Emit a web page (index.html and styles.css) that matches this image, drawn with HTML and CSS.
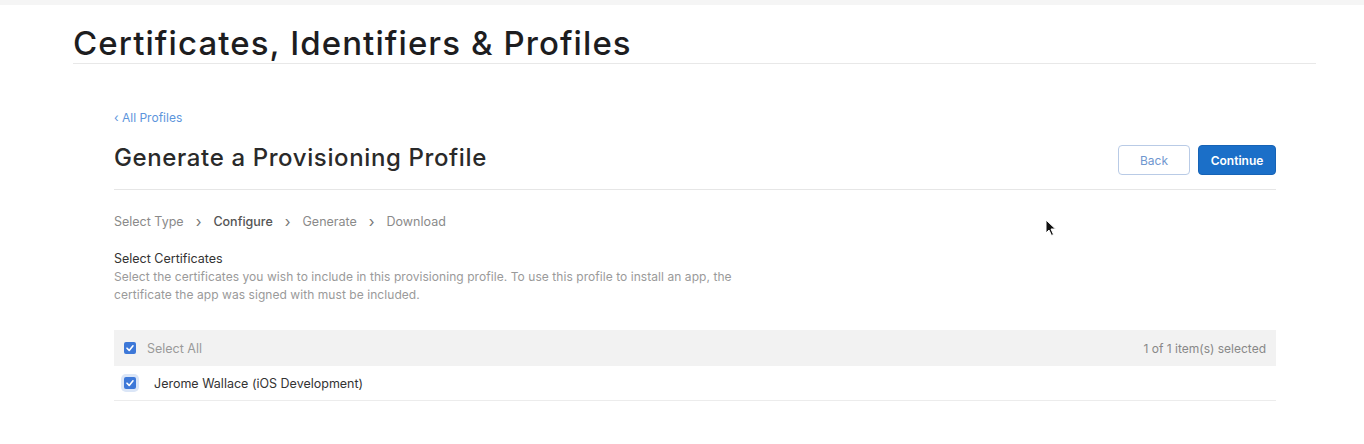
FILE: index.html
```html
<!DOCTYPE html>
<html>
<head>
<meta charset="utf-8">
<link rel="stylesheet" href="styles.css">
</head>
<body>
<div class="topbar"></div>
<header class="page-head">
  <h1>Certificates, Identifiers &amp; Profiles</h1>
</header>
<main class="content">
  <a class="back-link" href="#">&lsaquo; All Profiles</a>
  <div class="title-row">
    <h2>Generate a Provisioning Profile</h2>
    <div class="actions">
      <button class="btn btn-secondary">Back</button>
      <button class="btn btn-primary">Continue</button>
    </div>
  </div>
  <nav class="steps">
    <span>Select Type</span><span class="sep">&rsaquo;</span>
    <span class="current">Configure</span><span class="sep">&rsaquo;</span>
    <span>Generate</span><span class="sep">&rsaquo;</span>
    <span>Download</span>
  </nav>
  <section class="section">
    <h3>Select Certificates</h3>
    <p>Select the certificates you wish to include in this provisioning profile. To use this profile to install an app, the<br>certificate the app was signed with must be included.</p>
  </section>
  <div class="table">
    <div class="row head">
      <label class="check"><span class="box"><svg viewBox="0 0 12 12" width="12" height="12"><path d="M3 6.2 L5.2 8.4 L9 3.8" fill="none" stroke="#fff" stroke-width="1.6" stroke-linecap="round" stroke-linejoin="round"/></svg></span>Select All</label>
      <span class="count">1 of 1 item(s) selected</span>
    </div>
    <div class="row item">
      <label class="check"><span class="box focus"><svg viewBox="0 0 12 12" width="12" height="12"><path d="M3 6.2 L5.2 8.4 L9 3.8" fill="none" stroke="#fff" stroke-width="1.6" stroke-linecap="round" stroke-linejoin="round"/></svg></span>Jerome Wallace (iOS Development)</label>
    </div>
  </div>
</main>
<svg class="cursor" width="12" height="18" viewBox="0 0 12 18"><path d="M1 1 L1 14 L4 11 L6.5 16.5 L8.5 15.5 L6 10 L10.5 10 Z" fill="#111" stroke="#fff" stroke-width="1"/></svg>
</body>
</html>
```
FILE: styles.css
```css
* { box-sizing: border-box; }
html, body { margin: 0; padding: 0; background: #fff; }
body {
  font-family: Inter, "Liberation Sans", sans-serif;
  color: #1d1d1f;
  width: 1364px;
  height: 444px;
  overflow: hidden;
  position: relative;
}
.topbar { height: 5px; background: #f5f5f5; }
.page-head {
  margin: 0 48px 0 73px;
  border-bottom: 1px solid #e8e8e8;
  padding-top: 19px;
  height: 59px;
}
.page-head h1 {
  margin: 0;
  font-size: 33px;
  font-weight: 500;
  letter-spacing: 1.08px;
  line-height: 38px;
  color: #1d1d1f;
}
.content {
  margin: 0 88px 0 114px;
  padding-top: 46px;
}
.back-link {
  display: block;
  font-size: 12px;
  color: #5d95dc;
  text-decoration: none;
  line-height: 16px;
}
.title-row {
  display: flex;
  justify-content: space-between;
  align-items: flex-end;
  border-bottom: 1px solid #e6e6e6;
  height: 64px;
  padding-bottom: 14px;
}
.title-row h2 {
  margin: 0 0 3px;
  font-size: 24px;
  font-weight: 500;
  letter-spacing: 0.62px;
  line-height: 28px;
  color: #2a2a2a;
}
.actions { display: flex; gap: 8px; }
.btn {
  font-family: inherit;
  height: 30px;
  border-radius: 4px;
  font-size: 12px;
  padding: 0 10px;
}
.btn-secondary {
  width: 72px;
  background: #fff;
  color: #6f97cf;
  border: 1px solid #b9cbe6;
  font-weight: 400;
}
.btn-primary {
  width: 78px;
  background: #1b6fc8;
  border: 1px solid #1663b6;
  color: #fff;
  font-weight: 600;
}
.steps {
  display: flex;
  align-items: center;
  font-size: 12.5px;
  color: #8a8a8a;
  padding-top: 24px;
  line-height: 16px;
}
.steps .current { color: #555; font-weight: 500; }
.steps .sep { margin: 0 12px; font-size: 15px; color: #777; }
.section { padding-top: 20px; }
.section h3 {
  margin: 0;
  font-size: 12.5px;
  font-weight: 400;
  color: #333;
  line-height: 18px;
}
.section p {
  margin: 0;
  font-size: 12px;
  letter-spacing: 0.06px;
  color: #9a9a9a;
  line-height: 18px;
}
.table { margin-top: 26px; }
.row {
  display: flex;
  align-items: center;
  justify-content: space-between;
  padding: 0 10px;
  font-size: 12.5px;
}
.row.head { background: #f2f2f2; height: 36px; color: #9a9a9a; }
.row.item { height: 35px; border-bottom: 1px solid #ececec; color: #333; }
.check { display: flex; align-items: center; }
.box {
  width: 12px;
  height: 12px;
  border-radius: 2px;
  background: #3d78d8;
  display: inline-flex;
  margin-right: 11px;
}
.box.focus {
  box-shadow: 0 0 0 3px #dbe6f7;
  margin-right: 18px;
}
.count { color: #888; font-size: 12px; }
.cursor { position: absolute; left: 1045px; top: 219px; }
```
